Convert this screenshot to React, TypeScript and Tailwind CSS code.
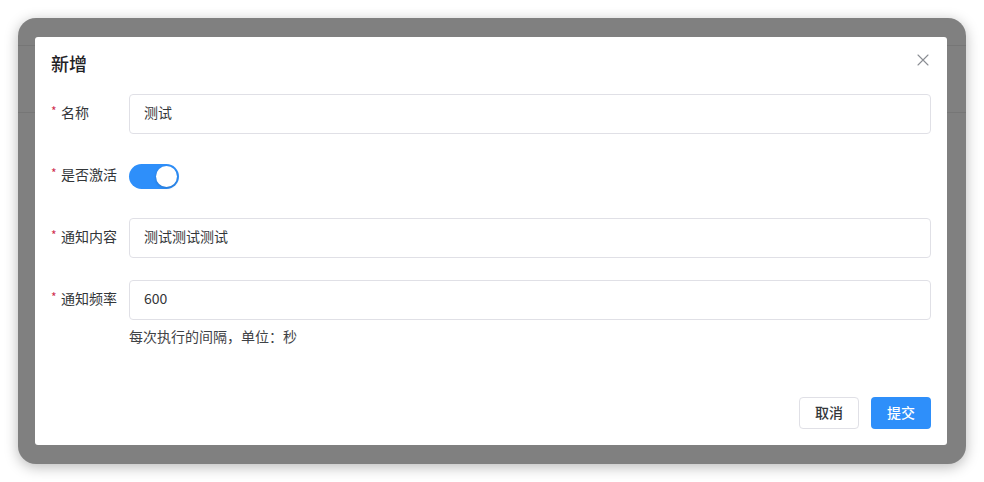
import React from 'react'

const font = { fontFamily: '"Noto Sans CJK SC", "Noto Sans", sans-serif' }

interface FieldProps {
  label: string
  children: React.ReactNode
  feedback?: string
}

const FormRow: React.FC<FieldProps> = ({ label, children, feedback }) => {
  return (
    <div className="flex flex-col">
      <div className="flex items-center h-[40px]">
        <div className="w-[78px] shrink-0 flex items-center pb-[3px] text-[14px] text-[#333639]">
          <span className="text-[#d03050] text-[12px] w-[10px] -mt-[3px]">*</span>
          <span>{label}</span>
        </div>
        <div className="flex-1 flex items-center">{children}</div>
      </div>
      {feedback ? (
        <div className="pl-[78px] pt-[6px] h-[28px] text-[14px] leading-[20px] text-[#3f4246]">
          {feedback}
        </div>
      ) : (
        <div className="h-[22px]" />
      )}
    </div>
  )
}

const TextInput: React.FC<{ value: string }> = ({ value }) => (
  <div className="w-full h-[40px] rounded-[4px] border border-[#e0e0e6] bg-white flex items-center pl-[14px] pb-[3px] text-[14px] text-[#333639]">
    {value}
  </div>
)

const Toggle: React.FC = () => (
  <div className="w-[50px] h-[25px] rounded-full bg-[#2e8ffa] flex items-center justify-end pr-[2px]">
    <div className="w-[21px] h-[21px] rounded-full bg-white shadow-[0_1px_3px_rgba(0,0,0,0.2)]" />
  </div>
)

const App: React.FC = () => {
  return (
    <div className="w-[984px] h-[482px] bg-white pt-[18px] pl-[18px]" style={font}>
      <div className="relative w-[948px] h-[446px] rounded-[18px] bg-[#808080] overflow-hidden shadow-[0_3px_14px_rgba(0,0,0,0.28)]">
        {/* page behind the mask */}
        <div className="h-[28px] border-b border-[#767676]" />
        <div className="h-[67px] border-b border-[#767676]" />

        <div className="absolute left-[17px] top-[19px] right-[19px] bottom-[19px] bg-white rounded-[3px] flex flex-col px-4">
          <div className="flex items-start justify-between pt-[14px] h-[40px]">
            <div className="text-[18px] leading-[24px] font-medium text-[#1f2225]">新增</div>
            <button className="mt-[3px] mr-[2px] w-[12px] h-[12px] flex items-center justify-center">
              <svg width="12" height="12" viewBox="0 0 12 12" fill="none">
                <path d="M1 1 L11 11 M11 1 L1 11" stroke="#8a8d93" strokeWidth="1.1" strokeLinecap="round" />
              </svg>
            </button>
          </div>

          <div className="mt-[17px] flex flex-col">
            <FormRow label="名称">
              <TextInput value="测试" />
            </FormRow>
            <FormRow label="是否激活">
              <Toggle />
            </FormRow>
            <FormRow label="通知内容">
              <TextInput value="测试测试测试" />
            </FormRow>
            <FormRow label="通知频率" feedback="每次执行的间隔，单位：秒">
              <TextInput value="600" />
            </FormRow>
          </div>

          <div className="mt-auto pb-4 flex justify-end gap-3">
            <button className="w-[60px] h-[32px] rounded-[4px] border border-[#e0e0e6] bg-white pb-[2px] text-[14px] font-medium text-[#333639]">
              取消
            </button>
            <button className="w-[60px] h-[32px] rounded-[4px] bg-[#2e8ffa] pb-[2px] text-[14px] font-medium text-white">
              提交
            </button>
          </div>
        </div>
      </div>
    </div>
  )
}

export default App
